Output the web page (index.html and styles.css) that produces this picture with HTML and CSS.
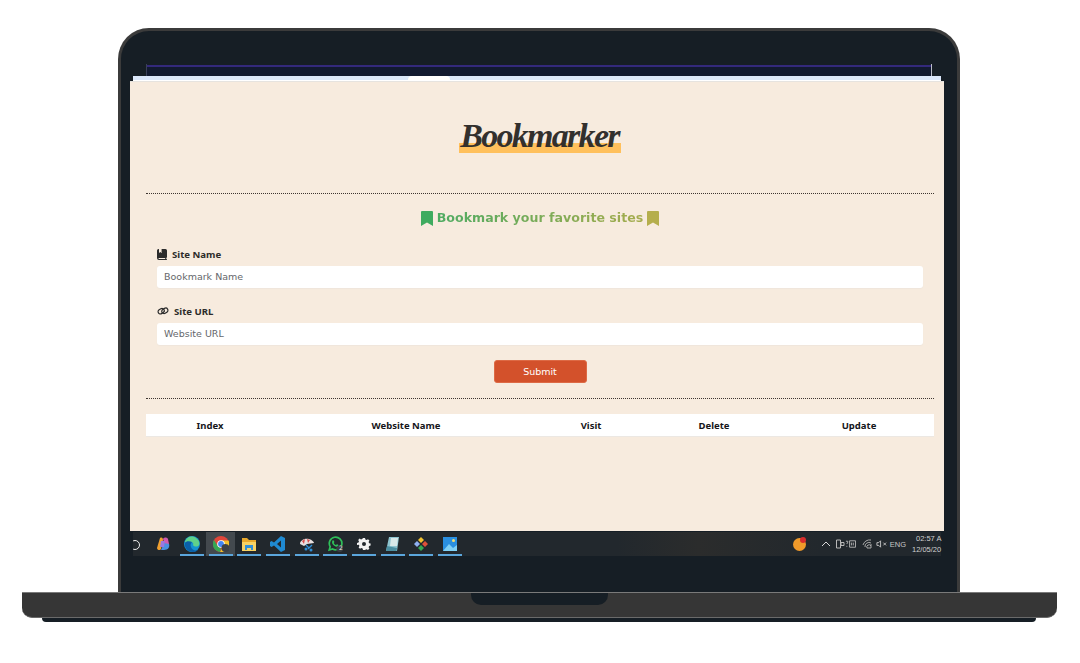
FILE: index.html
```html
<!DOCTYPE html>
<html lang="en">
<head>
<meta charset="utf-8">
<title>Bookmarker</title>
<link rel="stylesheet" href="styles.css">
</head>
<body>
<div class="laptop">
  <div class="device">
    <div class="tabstrip"></div>
    <div class="bookmarksbar"><span class="activetab"></span></div>
    <main class="page">
      <header class="masthead"><h1 class="logo">Bookmarker</h1></header>
      <hr class="rule">
      <h2 class="tagline">
        <svg class="mark" viewBox="0 0 12 15"><path fill="#3fab5f" d="M0 1a1 1 0 0 1 1-1h10a1 1 0 0 1 1 1v14l-6-3.6L0 15z"/></svg>
        <span class="tagtext">Bookmark your favorite sites</span>
        <svg class="mark" viewBox="0 0 12 15"><path fill="#b5ae4c" d="M0 1a1 1 0 0 1 1-1h10a1 1 0 0 1 1 1v14l-6-3.6L0 15z"/></svg>
      </h2>
      <form class="form">
        <label class="label">
          <svg class="lab-icon" viewBox="0 0 10 11"><path fill="#2b2b2b" d="M1.5 0H2v4l1.3-1L4.6 4V0h3.9A1.5 1.5 0 0 1 10 1.500V8a1 1 0 0 1-.7.9v1h.2a.5.5 0 0 1 0 1H2a2 2 0 0 1-2-2V1.500A1.500 1.500 0 0 1 1.500 0zM2 9a.5.5 0 0 0 0 1h6.200V9z"/></svg>
          Site Name
        </label>
        <div class="field">Bookmark Name</div>
        <label class="label label-url">
          <svg class="lab-icon lab-link" viewBox="0 0 12 10"><g fill="none" stroke="#2b2b2b" stroke-width="1.200"><rect x="0.800" y="3" width="6.500" height="4.500" rx="2.250" transform="rotate(-32 4 5)"/><rect x="4.700" y="2.500" width="6.500" height="4.500" rx="2.250" transform="rotate(-32 8 5)"/></g></svg>
          Site URL
        </label>
        <div class="field">Website URL</div>
        <div class="actions"><button class="submit" type="button">Submit</button></div>
      </form>
      <hr class="rule">
      <table class="sites">
        <thead>
          <tr>
            <th class="c-index">Index</th>
            <th class="c-name">Website Name</th>
            <th class="c-visit">Visit</th>
            <th class="c-delete">Delete</th>
            <th class="c-update">Update</th>
          </tr>
        </thead>
      </table>
    </main>
    <footer class="taskbar">
      <div class="tasks">
        <span class="search"></span>
        <span class="task plain"><svg viewBox="0 0 16 16"><path fill="#f0a030" d="M5 2c2-1 3 0 3 2L6 13c-1 2-4 1-4-1z"/><path fill="#d05ab0" d="M8 3c1-2 4-2 5 0l1 5c0 2-3 2-4 1z"/><path fill="#4a90e0" d="M9 7l5 1c1 3-1 6-5 6H6z"/><path fill="#9a78e0" d="M6 5h4l-1 6H5z"/></svg><i></i></span>
        <span class="task"><svg viewBox="0 0 16 16"><circle cx="8" cy="8" r="8" fill="#1493d0"/><path fill="#5fd18a" d="M1 6c1-5 7-7 11-4 3 2 4 5 3 7-1 2-5 2-6 0 1-2-1-4-4-3-2 .5-3 1-4 0z"/><path fill="#0b5fa8" d="M1 7c-1 5 3 9 8 9 2 0 4-1 5-2-3 1-6 0-7-3-1-2 0-4 1-5-3-1-6-1-7 1z"/></svg><i></i></span>
        <span class="task active"><svg viewBox="0 0 16 16"><circle cx="8" cy="8" r="8" fill="#e0463a"/><path fill="#f3c22c" d="M8 4.500h7.500A8 8 0 0 1 7 16l3.500-6z"/><path fill="#35a853" d="M1 4l4 6.500L8 12l-1 4A8 8 0 0 1 1 4z"/><circle cx="8" cy="8" r="3.800" fill="#fff"/><circle cx="8" cy="8" r="2.900" fill="#4285f4"/><circle cx="12.500" cy="12" r="4" fill="#3c4146"/></svg><i></i></span>
        <span class="task"><svg viewBox="0 0 16 16"><path fill="#e9a92c" d="M1 2h5l2 2h7v11H1z"/><path fill="#f7d264" d="M1 6h14v9H1z"/><path fill="#2f8fd8" d="M4 9h8v5h-2v-2H6v2H4z"/></svg><i></i></span>
        <span class="task"><svg viewBox="0 0 16 16"><path fill="#1f8ad2" d="M11 0l4 2v12l-4 2-7-6.500L1.500 11 0 10V6l1.500-1L4 6.500zM11 4.500L7 8l4 3.500z"/></svg><i></i></span>
        <span class="task"><svg viewBox="0 0 16 16"><path fill="#e8e0e0" d="M1 8c0-4 5-6 9-5 3 .7 5 3 5 4l-7 1-3 2-2-1z"/><path fill="#d84a4a" d="M3 5l2 3 1-5zM8 3l1 4 2-3z"/><path fill="none" stroke="#2f8fd8" stroke-width="1.400" d="M7 9l3 3m3-3l-4 4"/><circle cx="7" cy="13" r="1.500" fill="#2f8fd8"/><circle cx="12" cy="14" r="1.500" fill="#2f8fd8"/></svg><i></i></span>
        <span class="task"><svg viewBox="0 0 16 16"><path fill="none" stroke="#2fc05a" stroke-width="1.700" d="M2.200 14l1-3.300A6.300 6.300 0 1 1 5.600 13z"/><path fill="#2fc05a" d="M5.500 4.500c1-.8 1.600.6 1.800 1.400 0 .7-.8.800-.3 1.500.5.700 1.100 1.200 1.800 1.500.6 0 .8-1 1.400-.7l1.200.8c.2 1-1 2-2.300 1.700C6.500 10 4 7 5.500 4.500z"/><circle cx="12.700" cy="12.700" r="3.300" fill="#3a3f44"/></svg><b class="badge2">2</b><i></i></span>
        <span class="task"><svg viewBox="0 0 16 16"><path fill="#f2f2f2" fill-rule="evenodd" d="M7 2h2l.4 1.500 1.200.5 1.400-.8 1.400 1.400-.8 1.400.5 1.200 1.500.4v2l-1.500.4-.5 1.200.8 1.400-1.400 1.400-1.400-.8-1.200.5L9 14H7l-.4-1.500-1.200-.5-1.400.8-1.400-1.400.8-1.400-.5-1.200L1 9V7l1.500-.4.5-1.200-.8-1.400 1.400-1.400 1.400.8 1.200-.5zM8 6a2 2 0 1 0 0 4 2 2 0 0 0 0-4z"/></svg><i></i></span>
        <span class="task"><svg viewBox="0 0 16 16"><path fill="#8fc5d0" d="M4 1h10l-2 14H1z"/><path fill="#d8e8e8" d="M6 2h7l-1 8H5z"/><path fill="#4b8ea0" d="M1 15l1-5 10 2-.5 3z"/></svg><i></i></span>
        <span class="task"><svg viewBox="0 0 16 16"><path fill="#f2c230" d="M8 1l3 3-3 3-3-3z"/><path fill="#e0503a" d="M12 5l3 3-3 3-3-3z"/><path fill="#8fb0f0" d="M4 5l3 3-3 3-3-3z"/><path fill="#35a853" d="M8 9l3 3-3 3-3-3z"/></svg><i></i></span>
        <span class="task"><svg viewBox="0 0 16 16"><path fill="#2a8fe0" d="M1 1h14v14H1z"/><path fill="#7fd0f5" d="M1 15l6-7 4 4 4-3v6z"/><circle cx="11.500" cy="4.500" r="1.500" fill="#f5e070"/></svg><i></i></span>
      </div>
      <div class="tray">
        <span class="notify"><b></b></span>
        <svg class="chev" viewBox="0 0 10 6"><path fill="none" stroke="#d8d8d8" d="M1 5l4-4 4 4"/></svg>
        <svg class="tray-icon t1" viewBox="0 0 10 10"><path fill="none" stroke="#b8b8b8" d="M1.500 1h4v8h-4zM6 3.500h3v3H6z"/></svg>
        <svg class="tray-icon t2" viewBox="0 0 12 10"><path fill="none" stroke="#b8b8b8" d="M1 2h2v1L2 5M2 7v1M5 1.500h6.500v7H5zM7 3.500v3M9 3.500v3"/></svg>
        <svg class="tray-icon t3" viewBox="0 0 10 10"><path fill="none" stroke="#a8a8a8" d="M1 6a7 7 0 0 1 8-5M3 8a4 4 0 0 1 6-4M5 9a2 2 0 0 1 4-2M9 5v4H5"/></svg>
        <svg class="tray-icon t4" viewBox="0 0 12 10"><path fill="none" stroke="#c8c8c8" d="M1 3.500h2L5 1.500v7L3 6.500H1zM8 3.500l3 3M11 3.500l-3 3"/></svg>
        <span class="lang">ENG</span>
        <span class="clock"><span class="clock-time">02:57 A</span><span>12/05/20</span></span>
      </div>
    </footer>
  </div>
  <div class="base"><div class="notch"></div></div>
  <div class="foot"></div>
</div>
</body>
</html>
```

FILE: styles.css
```css
* { box-sizing: border-box; }
html, body { margin: 0; background: #fff; }
body { width: 1080px; height: 663px; overflow: hidden; font-family: "DejaVu Sans", sans-serif; }

.laptop { padding: 28px 23px 0 22px; display: flex; flex-direction: column; }

.device {
  width: 842px; height: 564px; margin-left: 96px;
  background: #161e25;
  border: 3px solid #3b3b3b; border-bottom: 0;
  border-radius: 31px 31px 0 0;
  padding-top: 33px;
  display: flex; flex-direction: column;
}
.tabstrip {
  height: 12px; margin: 0 25px;
  background: linear-gradient(#161e25 0 1px, #33297c 1px 3px, #121a30 3px);
  border-left: 1px solid #3a4058; border-right: 1px solid #b9bcc8;
}
.bookmarksbar {
  height: 5px; margin: 0 16px 0 12px;
  background: linear-gradient(#dbe8fb 0 4px, #fff 4px);
  padding-left: 275px;
  display: flex;
}
.activetab { width: 42px; background: #fff; border-radius: 4px 4px 0 0; }

.page {
  height: 450px; margin: 0 13px 0 9px;
  background: #f7ebde;
  border-top: 1px solid #e6e3df;
  padding: 0 10px 0 16px;
}
.masthead { height: 111px; display: flex; justify-content: center; padding-top: 36px; }
.logo {
  margin: 0; height: 35px;
  font: italic 700 34px/36px "Liberation Serif", serif;
  color: #33302d; letter-spacing: -1.700px;
  background: linear-gradient(transparent 0 25px, #ffc05c 25px 35px);
  padding: 0 2px 0 1px;
}
.rule { margin: 0; height: 1px; border: 0; border-top: 1px dotted #3d3530; }

.tagline {
  margin: 15px 0 0; height: 18px;
  display: flex; justify-content: center; align-items: center; gap: 4px;
  font: 700 12.600px/18px "DejaVu Sans", sans-serif;
}
.mark { width: 12px; height: 15px; }
.tagtext {
  background: linear-gradient(90deg, #4fab62, #a6ac4e);
  -webkit-background-clip: text; background-clip: text; color: transparent;
}

.form { padding: 0 11px; }
.label {
  display: flex; align-items: center; gap: 5px;
  margin-top: 19px; height: 16px;
  font: 700 9.600px "Noto Sans", sans-serif; color: #2d2b2a;
}
.label-url { margin-top: 15px; }
.lab-icon { width: 10px; height: 11px; }
.lab-link { width: 12px; height: 10px; }
.field {
  height: 22px; margin-top: 4px;
  background: #fff; border-radius: 3px; box-shadow: 0 1px 1px #efe6dc;
  padding-left: 7px;
  font-size: 9.500px; line-height: 22px; color: #65676b;
}
.actions { display: flex; justify-content: center; margin-top: 15px; }
.submit {
  width: 93px; height: 23px; padding: 0;
  background: #d3512b; border: 1px solid #dd6a45; border-radius: 3px;
  font: 9.500px "DejaVu Sans", sans-serif; color: #fff;
}
.form + .rule { margin-top: 15px; }

.sites {
  width: 100%; margin-top: 15px; height: 23px;
  border-collapse: collapse; table-layout: fixed;
  background: #fff; border-bottom: 1px solid #ece8e3;
}
.sites th { padding: 0; font: 700 9.500px "Noto Sans", sans-serif; color: #16161a; text-align: center; }
.c-index { width: 128px; }
.c-name { width: 264px; }
.c-visit { width: 106px; }
.c-delete { width: 140px; }

.taskbar {
  height: 24px; margin: 1px 16px 0 12px;
  background: linear-gradient(90deg, #22282d 0 60%, #2b2c2c 70%, #22282d 85%);
  display: flex; justify-content: space-between;
}
.tasks { display: flex; }
.search { width: 15.800px; height: 100%; overflow: hidden; }
.search::before {
  content: ""; display: block; width: 8px; height: 8px; margin: 8px 0 0 -3px;
  border: 1.500px solid #eee; border-radius: 50%;
}
.task {
  width: 28.700px; height: 24px; padding-top: 4px;
  display: flex; flex-direction: column; align-items: center;
  position: relative;
}
.task svg { width: 16px; height: 16px; display: block; }
.task i { display: block; width: 24px; height: 2px; margin-top: auto; background: #5ba6dc; }
.task.plain i { background: transparent; }
.task.active { background: #43494e; }
.badge2 {
  position: absolute; left: 18px; top: 12px;
  font-size: 6px; font-weight: 400; color: #eee;
}

.tray { display: flex; align-items: center; }
.notify {
  width: 13px; height: 13px; border-radius: 50%;
  background: #f09a2a; position: relative; margin-right: 14.500px;
}
.notify b {
  position: absolute; right: 0; top: -1px;
  width: 6px; height: 6px; border-radius: 50%; background: #d82c2c;
}
.chev { width: 10px; height: 6px; margin-right: 4px; }
.tray-icon { height: 10px; width: 10px; }
.t1 { margin-right: 0.500px; }
.t2 { width: 11px; margin-right: 5.500px; }
.t3 { margin-right: 4px; }
.t4 { width: 11px; margin-right: 3px; }
.lang { font: 7.500px "Liberation Sans", sans-serif; color: #c8c8c8; margin-right: 6px; }
.clock {
  display: flex; flex-direction: column; width: 29px;
  font: 7.500px/11px "Liberation Sans", sans-serif; color: #d0d0d0; white-space: nowrap;
}
.clock-time { margin-left: 4px; }

.base {
  width: 1035px; height: 26px;
  background: #363636;
  border-top: 1px solid #7a7a7a; border-bottom: 1px solid #6a6a6a;
  border-radius: 0 0 10px 10px;
  display: flex; justify-content: center;
}
.notch {
  width: 137px; height: 12px; background: #161e25;
  border-radius: 0 0 10px 10px;
}
.foot {
  width: 994px; height: 4px; margin-left: 20px;
  background: #161e25; border-radius: 0 0 5px 5px;
}
```
